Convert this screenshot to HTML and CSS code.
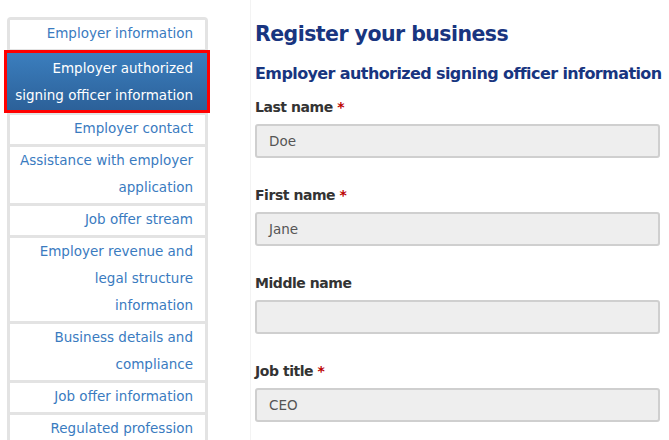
FILE: index.html
```html
<!DOCTYPE html>
<html lang="en">
<head>
<meta charset="utf-8">
<title>Register your business</title>
<link rel="stylesheet" href="styles.css">
</head>
<body>
<div class="page">
  <nav class="sidebar">
    <ul class="steps">
      <li class="step">Employer information</li>
      <li class="step active">Employer authorized signing officer information</li>
      <li class="step">Employer contact</li>
      <li class="step">Assistance with employer application</li>
      <li class="step">Job offer stream</li>
      <li class="step">Employer revenue and legal structure information</li>
      <li class="step">Business details and compliance</li>
      <li class="step">Job offer information</li>
      <li class="step">Regulated profession</li>
    </ul>
  </nav>
  <main class="main">
    <h1 class="title">Register your business</h1>
    <h2 class="subtitle">Employer authorized signing officer information</h2>
    <div class="field">
      <label class="label">Last name <span class="req">*</span></label>
      <div class="input">Doe</div>
    </div>
    <div class="field">
      <label class="label">First name <span class="req">*</span></label>
      <div class="input">Jane</div>
    </div>
    <div class="field">
      <label class="label">Middle name</label>
      <div class="input"></div>
    </div>
    <div class="field">
      <label class="label">Job title <span class="req">*</span></label>
      <div class="input">CEO</div>
    </div>
  </main>
</div>
</body>
</html>
```
FILE: styles.css
```css
html, body {
  margin: 0;
  padding: 0;
  background: #fff;
}
body {
  font-family: "DejaVu Sans", Verdana, sans-serif;
  font-size: 13px;
  color: #333;
  overflow: hidden;
  height: 440px;
}
.page {
  display: flex;
  align-items: flex-start;
}
.sidebar {
  width: 201px;
  padding: 17px 0 0 7px;
  flex: none;
}
.steps {
  list-style: none;
  margin: 0;
  padding: 3px;
  background: #e3e3e3;
  border-radius: 4px 4px 0 0;
  display: flex;
  flex-direction: column;
  gap: 3px;
}
.step {
  background: #fff;
  color: #3a7bbf;
  text-align: right;
  font-size: 13.5px;
  line-height: 27px;
  padding: 0 12px 2px 6px;
}
.step.active {
  margin: 1px -2px 2px -3px;
  padding: 2px 14px 1px 2px;
  background: linear-gradient(#3b7ebe, #2c6199);
  color: #fff;
  outline: 3px solid #f00;
}
.main {
  margin-left: 42px;
  border-left: 1px solid #f3f3f3;
  padding: 0 9px 0 4px;
  flex: 1;
  min-width: 0;
  min-height: 440px;
}
.title {
  margin: 20px 0 0;
  font-size: 20.5px;
  letter-spacing: -0.55px;
  line-height: 28px;
  color: #183580;
  font-weight: bold;
}
.subtitle {
  margin: 16px 0 0;
  font-size: 16px;
  letter-spacing: -0.6px;
  line-height: 20px;
  color: #183580;
  font-weight: bold;
  white-space: nowrap;
}
.field {
  margin-top: 13px;
  margin-bottom: 27px;
}
.field + .field {
  margin-top: 0;
}
.label {
  display: block;
  font-weight: bold;
  font-size: 14px;
  letter-spacing: -0.45px;
  line-height: 20px;
  margin-bottom: 7px;
  color: #333;
}
.req {
  color: #b00;
}
.input {
  height: 30px;
  border: 2px solid #cfcfcf;
  border-radius: 3px;
  background: #eee;
  color: #555;
  font-size: 13.5px;
  line-height: 30px;
  padding: 0 12px;
}
```
